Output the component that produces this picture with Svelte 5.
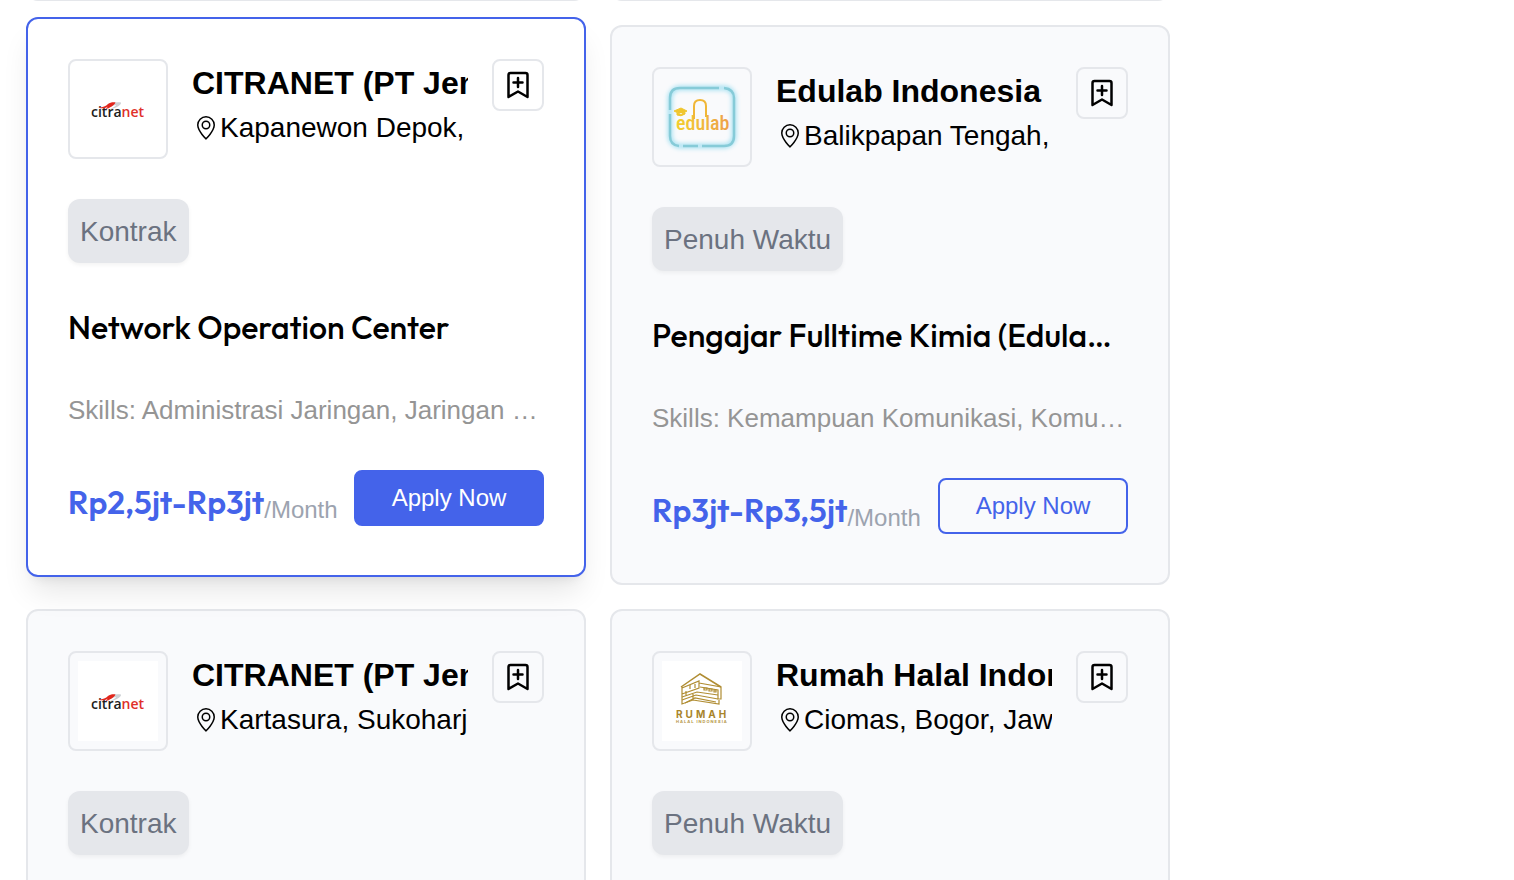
<script lang="ts">
  type Job = {
    company: string;
    logo: 'citranet' | 'edulab' | 'rumah';
    location: string;
    type: string;
    title: string;
    skills: string;
    salary: string;
    active?: boolean;
  };

  const jobs: Job[] = [
    {
      company: 'CITRANET (PT Jem',
      logo: 'citranet',
      location: 'Kapanewon Depok,',
      type: 'Kontrak',
      title: 'Network Operation Center',
      skills: 'Skills: Administrasi Jaringan, Jaringan …',
      salary: 'Rp2,5jt-Rp3jt',
      active: true
    },
    {
      company: 'Edulab Indonesia',
      logo: 'edulab',
      location: 'Balikpapan Tengah,',
      type: 'Penuh Waktu',
      title: 'Pengajar Fulltime Kimia (Edula…',
      skills: 'Skills: Kemampuan Komunikasi, Komu…',
      salary: 'Rp3jt-Rp3,5jt'
    },
    {
      company: 'CITRANET (PT Jem',
      logo: 'citranet',
      location: 'Kartasura, Sukoharj',
      type: 'Kontrak',
      title: 'Network Operation Center',
      skills: 'Skills: Administrasi Jaringan, Jaringan …',
      salary: 'Rp2,5jt-Rp3jt'
    },
    {
      company: 'Rumah Halal Indon',
      logo: 'rumah',
      location: 'Ciomas, Bogor, Jaw',
      type: 'Penuh Waktu',
      title: 'Marketing Executive',
      skills: 'Skills: Komunikasi, Pemasaran',
      salary: 'Rp3jt-Rp3,5jt'
    }
  ];
</script>

<main>
  <div class="grid">
    <div class="card tail"></div>
    <div class="card tail"></div>
    {#each jobs as job}
      <article class="card" class:active={job.active}>
        <header>
          <div class="logo">
            {#if job.logo === 'citranet'}
              <svg viewBox="0 0 80 80" role="img" aria-label="citranet">
                <rect width="80" height="80" fill="#fff" />
                <path d="M27 38C32 33.500 39 32.500 43 33.500C43.500 36 38 39 31 41C35 38.500 38 37 38 36Z" fill="#cdd0d4" />
                <text x="13" y="48" class="citra">citra<tspan fill="#e0302a">net</tspan></text>
                <path d="M20.500 38.500C25 38.500 28 37 30 35C32 33.500 35 33 37.500 33.500C36.500 36 32 39 27 40.500L30 37.500C27 39.500 23 40 20.500 38.500Z" fill="#e1261c" />
              </svg>
            {:else if job.logo === 'edulab'}
              <svg viewBox="0 0 80 80" role="img" aria-label="edulab">
                <defs>
                  <filter id="glow" x="-20%" y="-20%" width="140%" height="140%">
                    <feGaussianBlur stdDeviation="2" />
                  </filter>
                  <linearGradient id="sun" x1="0" x2="1">
                    <stop offset="0" stop-color="#f3cf2e" />
                    <stop offset="1" stop-color="#eda04a" />
                  </linearGradient>
                </defs>
                <rect x="8" y="11" width="64" height="58" rx="10" fill="none" stroke="#a9e2f2" stroke-width="5" filter="url(#glow)" />
                <path d="M62 11Q72 12 72 21V59Q72 69 62 69H40M36 69H21M17 69Q8 68 8 59V37M8 33V21Q8 11 18 11H57" fill="none" stroke="#86cbd8" stroke-width="2.500" />
                <text x="14" y="53" class="edu" fill="url(#sun)">edulab</text>
                <path d="M32 42V29Q32 23 38 23Q44 23 44 29V40" fill="none" stroke="#f0b738" stroke-width="2" />
                <path d="M12 34L19 31L25 34L19 37.500ZM15 36V38Q19 40 23 37V36" fill="#f0c62e" stroke="#f0c62e" stroke-width="1" />
              </svg>
            {:else}
              <svg viewBox="0 0 80 80" role="img" aria-label="Rumah Halal Indonesia">
                <rect width="80" height="80" fill="#fff" />
                <g fill="none" stroke="#b08d33" stroke-width="1.200">
                  <path d="M19 26L38 13L59 26" stroke-width="1.500" />
                  <path d="M20 27L37 20V27L20 33M20 26V43L31 39L57 43V39M37 22L59 26V38H56V29L38 26" />
                  <path d="M20 36L35 31L56 34M20 39L34 34L56 38M23 42L33 37L54 41M31 33V39M24 30V35M28 24V28M33 23V27" />
                  <path d="M42 27V29H45V27ZM47 28V30H50V28ZM52 29V31H54V29Z" />
                </g>
                <text x="14" y="57" class="rumah">RUMAH</text>
                <text x="14" y="62" class="halal">HALAL INDONESIA</text>
              </svg>
            {/if}
          </div>
          <div class="company">
            <h2>{job.company}</h2>
            <p>
              <svg class="pin" viewBox="0 0 16 16" aria-hidden="true">
                <path d="M12.166 8.94c-.524 1.062-1.234 2.12-1.96 3.07A32 32 0 0 1 8 14.58a32 32 0 0 1-2.206-2.57c-.726-.95-1.436-2.008-1.96-3.07C3.304 7.867 3 6.862 3 6a5 5 0 0 1 10 0c0 .862-.305 1.867-.834 2.94M8 16s6-5.686 6-10A6 6 0 0 0 2 6c0 4.314 6 10 6 10" />
                <path d="M8 8a2 2 0 1 1 0-4 2 2 0 0 1 0 4m0 1a3 3 0 1 0 0-6 3 3 0 0 0 0 6" />
              </svg>{job.location}
            </p>
          </div>
          <button class="save" type="button" aria-label="Save job">
            <svg viewBox="0 0 32 32" aria-hidden="true">
              <path d="M6.500 28V6Q6.500 4 8.500 4H23.500Q25.500 4 25.500 6V28L16 22.500ZM16 9V18M11.500 13.500H20.500" />
            </svg>
          </button>
        </header>
        <span class="badge">{job.type}</span>
        <h3>{job.title}</h3>
        <p class="skills">{job.skills}</p>
        <footer>
          <p class="pay"><strong>{job.salary}</strong><span>/Month</span></p>
          <button class="apply" type="button">Apply Now</button>
        </footer>
      </article>
    {/each}
  </div>
</main>

<style>
  :global(body) {
    margin: 0;
    background: #fff;
  }
  main {
    box-sizing: border-box;
    height: 100vh;
    overflow: hidden;
    padding: 0 26px;
    color: #000;
    font-family: 'Liberation Sans', Helvetica, Arial, sans-serif;
  }
  .grid {
    display: grid;
    grid-template-columns: repeat(2, minmax(0, 560px));
    gap: 24px;
    margin-top: -39px;
  }
  .card {
    box-sizing: border-box;
    min-width: 0;
    display: flex;
    flex-direction: column;
    align-items: flex-start;
    padding: 40px;
    border: 2px solid #e5e7eb;
    border-radius: 12px;
    background: #f9fafc;
  }
  .tail {
    height: 40px;
    padding: 0;
  }
  .active {
    transform: translateY(-8px);
    border-color: #4463ea;
    background: #fff;
    box-shadow: 0 20px 30px -6px rgba(0, 0, 0, 0.1), 0 8px 12px -8px rgba(0, 0, 0, 0.1);
  }
  h2,
  h3,
  p {
    margin: 0;
    white-space: nowrap;
    overflow: hidden;
  }
  header {
    display: flex;
    align-items: flex-start;
    gap: 24px;
    width: 100%;
  }
  .logo {
    flex: none;
    padding: 8px;
    border: 2px solid #e5e7eb;
    border-radius: 8px;
  }
  .logo svg {
    display: block;
    width: 80px;
    height: 80px;
  }
  .citra {
    font: 600 14px 'Open Sans', sans-serif;
    fill: #1c1c1c;
  }
  .edu {
    font: 500 20px 'Liberation Sans Narrow', 'Roboto Condensed', sans-serif;
  }
  .rumah {
    font: 700 10px Inter, sans-serif;
    letter-spacing: 3px;
    fill: #a8842b;
  }
  .halal {
    font: 700 4px Inter, sans-serif;
    letter-spacing: 1px;
    fill: #b59647;
  }
  .company {
    flex: 1;
    min-width: 0;
  }
  h2 {
    font-size: 32px;
    line-height: 48px;
    font-weight: 700;
  }
  .company p {
    display: flex;
    align-items: center;
    gap: 2px;
    padding-left: 2px;
    font-size: 28px;
    line-height: 42px;
  }
  .pin {
    flex: none;
    width: 24px;
    height: 24px;
  }
  button {
    font-family: inherit;
    cursor: pointer;
  }
  .save {
    flex: none;
    box-sizing: border-box;
    display: grid;
    place-items: center;
    width: 52px;
    height: 52px;
    padding: 0;
    border: 2px solid #e5e7eb;
    border-radius: 8px;
    background: transparent;
  }
  .save svg {
    width: 32px;
    height: 32px;
    fill: none;
    stroke: #000;
    stroke-width: 2.5;
    stroke-linecap: round;
    stroke-linejoin: round;
  }
  .badge {
    margin-top: 40px;
    padding: 12px 12px 10px;
    border-radius: 12px;
    background: #e5e7eb;
    box-shadow: 0 2px 4px rgba(0, 0, 0, 0.05);
    color: #6b7280;
    font-size: 28px;
    line-height: 42px;
  }
  h3 {
    max-width: 100%;
    margin-top: 42px;
    font-family: Outfit, Lato, sans-serif;
    font-size: 32px;
    line-height: 44px;
    font-weight: 500;
  }
  .skills {
    max-width: 100%;
    margin-top: 41px;
    color: #959595;
    font-size: 26px;
    line-height: 40px;
  }
  footer {
    display: flex;
    justify-content: space-between;
    align-items: flex-start;
    width: 100%;
    margin-top: 40px;
    padding-bottom: 9px;
  }
  .pay {
    display: flex;
    align-items: flex-end;
    padding-top: 10px;
    line-height: 44px;
  }
  strong {
    color: #4463ea;
    font-family: Outfit, Lato, sans-serif;
    font-size: 32px;
    font-weight: 600;
  }
  .pay span {
    color: #9ca3af;
    font-size: 24px;
    line-height: 28px;
  }
  .apply {
    flex: none;
    box-sizing: border-box;
    width: 190px;
    height: 56px;
    padding: 0;
    border: 2px solid #4463ea;
    border-radius: 8px;
    background: transparent;
    color: #4463ea;
    font-size: 24px;
  }
  .active .apply {
    background: #4463ea;
    color: #fff;
  }
</style>
